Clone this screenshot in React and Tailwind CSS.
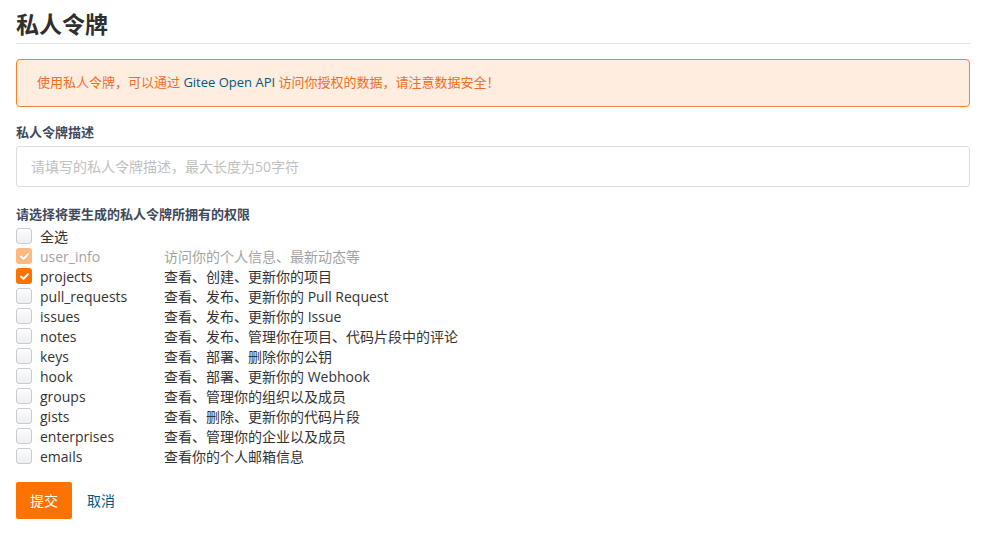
import React from "react";

const perms = [
  ["user_info", "访问你的个人信息、最新动态等", "disabled"],
  ["projects", "查看、创建、更新你的项目", "checked"],
  ["pull_requests", "查看、发布、更新你的 Pull Request", ""],
  ["issues", "查看、发布、更新你的 Issue", ""],
  ["notes", "查看、发布、管理你在项目、代码片段中的评论", ""],
  ["keys", "查看、部署、删除你的公钥", ""],
  ["hook", "查看、部署、更新你的 Webhook", ""],
  ["groups", "查看、管理你的组织以及成员", ""],
  ["gists", "查看、删除、更新你的代码片段", ""],
  ["enterprises", "查看、管理你的企业以及成员", ""],
  ["emails", "查看你的个人邮箱信息", ""],
];

function Box({ state }) {
  if (state === "checked" || state === "disabled") {
    return (
      <span
        className={
          "flex h-4 w-4 shrink-0 items-center justify-center rounded-[3px] " +
          (state === "checked" ? "bg-[#fe7300]" : "bg-[#fdb980]")
        }
      >
        <svg width="11" height="11" viewBox="0 0 12 12">
          <path d="M2.3 6.2 L4.9 8.6 L9.7 3.6" fill="none" stroke="#fff" strokeWidth="2.2" strokeLinecap="round" strokeLinejoin="round" />
        </svg>
      </span>
    );
  }
  return <span className="block h-4 w-4 shrink-0 rounded-[3px] border border-[#c9cbd1] bg-gradient-to-b from-[#fcfcfd] to-[#eeeff2]" />;
}

export default function App() {
  return (
    <div
      className="min-h-[540px] w-[995px] bg-white px-4 text-[14px] text-[#333]"
      style={{ fontFamily: '"Open Sans", "Noto Sans CJK SC", sans-serif' }}
    >
      <div className="w-[954px]">
        <h1 className="pt-[8px] pb-[3px] text-[23px] font-bold leading-[32px] text-[#2f2f2f]">私人令牌</h1>
        <div className="h-px bg-[#e3e3e3]" />
        <div className="mt-[15px] flex h-[48px] items-center rounded-[4px] border border-[#f5822a] bg-[#ffeddf] pl-[20px] text-[13px] text-[#f26d1f]">
          使用私人令牌，可以通过&nbsp;<span className="text-[#005980]">Gitee Open API</span>&nbsp;访问你授权的数据，请注意数据安全！
        </div>
        <div className="mt-[15px] text-[13px] font-bold leading-[20px] text-[#40485b]">私人令牌描述</div>
        <div className="mt-[4px] flex h-[41px] items-center rounded-[3px] border border-[#dcdde2] pl-[14px] text-[14px] text-[#c0c0c0]">
          请填写的私人令牌描述，最大长度为50字符
        </div>
        <div className="mt-[17px] text-[13px] font-bold leading-[20px] text-[#40485b]">请选择将要生成的私人令牌所拥有的权限</div>
        <div className="mt-[2px] flex flex-col">
          <div className="flex h-[20px] items-center">
            <Box state="" />
            <span className="ml-[8px] text-[#333]">全选</span>
          </div>
          {perms.map(([name, desc, state]) => (
            <div key={name} className="flex h-[20px] items-center">
              <Box state={state} />
              <span className={"ml-[8px] w-[124px] " + (state === "disabled" ? "text-[#a3a3a3]" : "text-[#333]")}>{name}</span>
              <span className={state === "disabled" ? "text-[#a3a3a3]" : "text-[#333]"}>{desc}</span>
            </div>
          ))}
        </div>
        <div className="mt-[16px] flex items-center">
          <button className="h-[37px] w-[56px] rounded-[2px] bg-[#fe7300] text-[14px] text-white">提交</button>
          <span className="ml-[15px] text-[#005980]">取消</span>
        </div>
      </div>
    </div>
  );
}
